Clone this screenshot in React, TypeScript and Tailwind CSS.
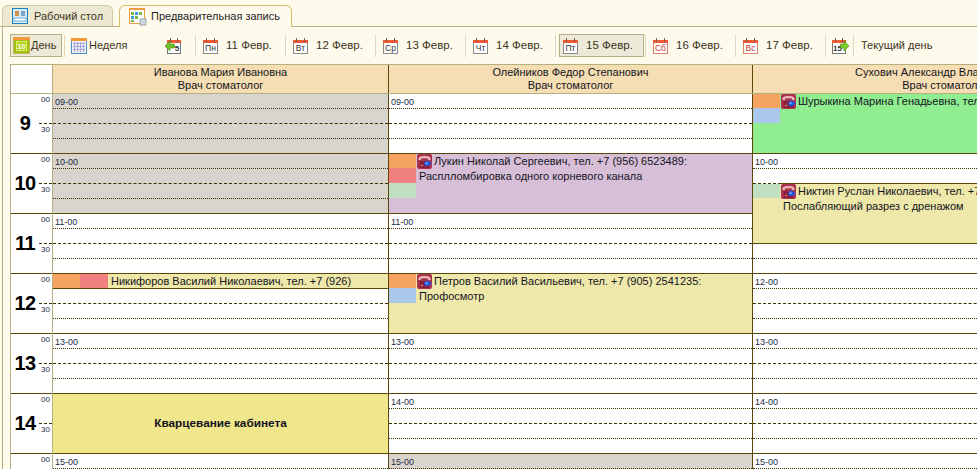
import React from 'react';

const SOLID = 'border-[#5a4808]';

type CalProps = { label: string; red?: boolean };

const CalIcon: React.FC<CalProps> = ({ label, red }) => (
  <svg width="15" height="16" viewBox="0 0 15 16" className="shrink-0">
    <rect x="0.5" y="2.5" width="14" height="13" fill="#fff" stroke={red ? '#e0806a' : '#8a8a8a'} />
    <rect x="0" y="2" width="15" height="3" fill="#ef5a35" />
    <rect x="3" y="0" width="1" height="4" fill="#7a5a50" />
    <rect x="11" y="0" width="1" height="4" fill="#7a5a50" />
    <text x="7.5" y="12.8" textAnchor="middle" fontSize="8.5" fontFamily="Liberation Sans" fill={red ? '#c8402a' : '#333'}>
      {label}
    </text>
  </svg>
);

const ArrowCal: React.FC<{ dir: 'left' | 'right' }> = ({ dir }) => (
  <svg width="17" height="16" viewBox="0 0 17 16" className="shrink-0">
    <rect x={dir === 'left' ? 2.5 : 0.5} y="2.5" width="13" height="13" fill="#fff" stroke="#777" />
    <rect x={dir === 'left' ? 2 : 0} y="2" width="14" height="3" fill="#ef5a35" />
    <rect x={dir === 'left' ? 5 : 3} y="0" width="1" height="4" fill="#7a5a50" />
    <rect x={dir === 'left' ? 12 : 10} y="0" width="1" height="4" fill="#7a5a50" />
    <text x={dir === 'left' ? 12 : 5.5} y="13" textAnchor="middle" fontSize="8" fontFamily="Liberation Sans" fontWeight="700" fill="#333">
      {dir === 'left' ? '5' : '15'}
    </text>
    {dir === 'left' ? (
      <path d="M0 8 L5 3 V6 H9.5 V10 H5 V13 Z" fill="#6cc02c" stroke="#3f8a16" strokeWidth="0.6" />
    ) : (
      <path d="M17 8 L12 3 V6 H8.5 V10 H12 V13 Z" fill="#7ccf2c" stroke="#3f8a16" strokeWidth="0.6" />
    )}
  </svg>
);

const DayIcon = () => (
  <svg width="17" height="17" viewBox="0 0 17 17" className="shrink-0">
    <rect x="0.5" y="0.5" width="16" height="16" fill="#9cc010" stroke="#c9b060" />
    <rect x="0" y="0" width="17" height="3" fill="#f39a3c" />
    <rect x="3.5" y="4.5" width="10" height="9" fill="#b4d020" stroke="#e4ec70" />
    <text x="8.5" y="12" textAnchor="middle" fontSize="7" fontFamily="Liberation Sans" fill="#fff" fontWeight="700">10</text>
  </svg>
);

const WeekIcon = () => (
  <svg width="16" height="16" viewBox="0 0 16 16" className="shrink-0">
    <rect x="0.5" y="0.5" width="15" height="15" fill="#eef0fa" stroke="#4a90c8" />
    <rect x="0" y="0" width="16" height="3" fill="#f39a3c" />
    <path d="M2 5.5h12M2 8.5h12M2 11.5h12M3.5 4v10M6.5 4v10M9.5 4v10M12.5 4v10" stroke="#a9a9d8" strokeWidth="1" />
  </svg>
);

const DesktopIcon = () => (
  <svg width="16" height="16" viewBox="0 0 16 16" className="shrink-0">
    <rect x="0.5" y="0.5" width="15" height="15" fill="#d9ecf8" stroke="#1b7fc0" />
    <rect x="3" y="3" width="4" height="5" fill="#c8924a" />
    <rect x="9" y="3" width="4" height="5" fill="#7aa4c8" />
    <rect x="2" y="10" width="12" height="3" fill="#fff" stroke="#1b7fc0" strokeWidth="0.6" />
  </svg>
);

const ScheduleIcon = () => (
  <svg width="18" height="18" viewBox="0 0 18 18" className="shrink-0">
    <rect x="0.5" y="0.5" width="15" height="15" fill="#fff" stroke="#e8a040" />
    <rect x="0" y="0" width="16" height="2" fill="#f39a3c" />
    <rect x="2" y="4" width="3" height="3" fill="#7cb342" />
    <rect x="6" y="4" width="3" height="3" fill="#3f9ad0" />
    <rect x="10" y="4" width="3" height="3" fill="#7cb342" />
    <rect x="2" y="8" width="3" height="3" fill="#3f9ad0" />
    <rect x="6" y="8" width="3" height="3" fill="#7cb342" />
    <rect x="2" y="12" width="3" height="2" fill="#7cb342" />
    <rect x="11" y="11" width="6" height="6" fill="#cfd8e0" stroke="#7a8a9a" strokeWidth="0.7" />
  </svg>
);

const PhoneIcon = () => (
  <svg width="15" height="15" viewBox="0 0 15 15" className="shrink-0">
    <rect x="0" y="0" width="15" height="15" rx="2" fill="#b03050" />
    <path d="M1 5 Q1 1.5 7.5 1.5 Q14 1.5 14 5 V6.5 H10.5 V4.8 H4.5 V6.5 H1 Z" fill="#f0b0b8" stroke="#6a1428" strokeWidth="0.5" />
    <rect x="2.5" y="7" width="10" height="7" rx="1" fill="#8a2038" />
    <circle cx="5" cy="11.5" r="0.8" fill="#f0b0b8" />
    <circle cx="10" cy="9.5" r="2.8" fill="#1f55e0" />
    <circle cx="9.6" cy="9.2" r="1" fill="#9fc0ff" />
    <path d="M12 7.5 L15 9.5 L12 11.5 Z" fill="#1f55e0" />
  </svg>
);

const Sep = () => <div className="w-px h-[22px] bg-[#dcd8bf] shrink-0" />;

const DayItem: React.FC<{ day: string; date: string; red?: boolean; active?: boolean }> = ({ day, date, red, active }) => (
  <div className="w-[90px] flex items-center shrink-0">
    <div className={`ml-[3px] w-[85px] h-[23px] pl-[3px] flex items-center border ${active ? 'border-[#b5b07f] bg-[#ece9d8]' : 'border-transparent'}`}>
      <CalIcon label={day} red={red} />
      <span className="ml-[8px] text-[11.5px] whitespace-nowrap">{date}</span>
    </div>
    <div className="ml-px"><Sep /></div>
  </div>
);

const Toolbar = () => (
  <div className="h-[37px] pl-[7px] flex items-center text-[11px] text-[#3b3320]">
    <div className="w-[52px] h-[23px] pl-[2px] flex items-center gap-[1px] border border-[#b5b07f] bg-[#ece9d8] shrink-0">
      <DayIcon />
      <span>День</span>
    </div>
    <div className="ml-[2px]"><Sep /></div>
    <div className="ml-[6px] w-[94px] flex items-center gap-[2px] shrink-0">
      <WeekIcon />
      <span>Неделя</span>
    </div>
    <div className="w-[30px] shrink-0"><ArrowCal dir="left" /></div>
    <Sep />
    <DayItem day="Пн" date="11 Февр." />
    <DayItem day="Вт" date="12 Февр." />
    <DayItem day="Ср" date="13 Февр." />
    <DayItem day="Чт" date="14 Февр." />
    <DayItem day="Пт" date="15 Февр." active />
    <DayItem day="Сб" date="16 Февр." red />
    <DayItem day="Вс" date="17 Февр." red />
    <div className="ml-[6px] mr-[4px] shrink-0"><ArrowCal dir="right" /></div>
    <Sep />
    <span className="ml-[7px] whitespace-nowrap">Текущий день</span>
  </div>
);

const slotLines = ['border-dotted', 'border-dashed', 'border-dotted'];

// a run of empty quarter-hour slots, the first one may carry the time label
const Slots: React.FC<{ from: number; count: number; label?: string; gray?: boolean }> = ({ from, count, label, gray }) => (
  <div className={gray ? 'bg-[#d9d4cd]' : 'bg-white'}>
    {Array.from({ length: count }).map((_, i) => {
      const idx = from + i;
      return (
        <div
          key={i}
          className={`h-[15px] border-b pl-[2px] text-[9px] leading-[17px] text-[#1a2a44] ${idx === 3 ? `border-solid ${SOLID}` : `${slotLines[idx]} border-[#3a3000]`}`}
        >
          {i === 0 && label}
        </div>
      );
    })}
  </div>
);

const chipColor: Record<string, string> = {
  o: 'bg-[#f4a460]',
  r: 'bg-[#f08080]',
  g: 'bg-[#c1dfc1]',
  b: 'bg-[#a9c8ec]',
};

const Appt: React.FC<{
  bg: string;
  chips: string[];
  name: string;
  note?: string;
  tucked?: boolean;
}> = ({ bg, chips, name, note, tucked }) => (
  <div className={`h-[60px] flex border-b ${SOLID} ${bg}`}>
    <div className="w-[27px] shrink-0 flex flex-col">
      {chips.map((c, i) => (
        <div key={i} className={`${chipColor[c]} ${i === 0 ? 'h-[14px]' : 'h-[15px]'}`} />
      ))}
    </div>
    <div className={`flex-1 min-w-0 pl-px ${tucked ? `-mt-px border-t ${SOLID}` : ''}`}>
      <div className="h-[15px] flex items-center gap-[2px] whitespace-nowrap">
        <PhoneIcon />
        <span>{name}</span>
      </div>
      {note && <div className="pl-[2px] leading-[14px] whitespace-nowrap">{note}</div>}
    </div>
  </div>
);

const TimeHour: React.FC<{ hour?: number }> = ({ hour }) => (
  <div className={`h-[60px] flex border-b ${SOLID}`}>
    <div className="flex-1 pb-[2px] flex items-center justify-center text-[20px] tracking-[-0.5px] leading-none font-bold text-black">{hour}</div>
    <div className="w-[13px] text-[8px] leading-[12px] text-right pr-[2px] text-[#1a2a44]">
      <div className="h-[15px]">00</div>
      <div className="h-[15px] -mr-[2px] border-b border-dashed border-[#3a3000]" />
      <div className="h-[15px]">30</div>
    </div>
  </div>
);

const ColHead: React.FC<{ name: string; w: string; last?: boolean }> = ({ name, w, last }) => (
  <div className={`${w} shrink-0 h-[28px] bg-[#f5deb3] text-center leading-[13px] pt-px ${last ? '' : `border-r ${SOLID}`}`}>
    <div>{name}</div>
    <div>Врач стоматолог</div>
  </div>
);

const Col: React.FC<{ w: string; last?: boolean; children: React.ReactNode }> = ({ w, last, children }) => (
  <div className={`${w} shrink-0 flex flex-col ${last ? '' : `border-r ${SOLID}`}`}>{children}</div>
);

const Schedule = () => (
  <div className="ml-[7px] w-[1200px] text-[11px] text-[#14141e]">
    <div className="flex border-y border-[#b5b07f]">
      <div className={`w-[43px] h-[28px] shrink-0 bg-white border-l border-[#b5b07f] border-r ${SOLID}`} />
      <ColHead w="w-[336px]" name="Иванова Мария Ивановна" />
      <ColHead w="w-[364px]" name="Олейников Федор Степанович" />
      <ColHead w="w-[384px]" name="Сухович Александр Владимирович" last />
    </div>
    <div className="flex">
      <div className={`w-[43px] shrink-0 bg-white border-l border-[#b5b07f] border-r ${SOLID}`}>
        {[9, 10, 11, 12, 13, 14].map((h) => (
          <TimeHour key={h} hour={h} />
        ))}
        <TimeHour />
      </div>
      <Col w="w-[336px]">
        <Slots from={0} count={4} label="09-00" gray />
        <Slots from={0} count={4} label="10-00" gray />
        <Slots from={0} count={4} label="11-00" />
        <div className={`h-[15px] flex border-b ${SOLID} bg-[#eee8aa]`}>
          <div className="w-[27px] h-[14px] bg-[#f4a460]" />
          <div className="w-[28px] h-[14px] bg-[#f08080]" />
          <span className="ml-[3px] leading-[14px] whitespace-nowrap">Никифоров Василий Николаевич, тел. +7 (926)</span>
        </div>
        <Slots from={1} count={3} />
        <Slots from={0} count={4} label="13-00" />
        <div className={`h-[60px] flex items-center justify-center bg-[#f0e68c] border-b ${SOLID} font-bold text-[11.8px]`}>
          Кварцевание кабинета
        </div>
        <Slots from={0} count={4} label="15-00" />
      </Col>
      <Col w="w-[364px]">
        <Slots from={0} count={4} label="09-00" />
        <Appt bg="bg-[#d8bfd8]" chips={['o', 'r', 'g']} name="Лукин Николай Сергеевич, тел. +7 (956) 6523489:" note="Расплломбировка одного корневого канала" />
        <Slots from={0} count={4} label="11-00" />
        <Appt bg="bg-[#eee8aa]" chips={['o', 'b']} name="Петров Василий Васильевич, тел. +7 (905) 2541235:" note="Профосмотр" />
        <Slots from={0} count={4} label="13-00" />
        <Slots from={0} count={4} label="14-00" />
        <Slots from={0} count={4} label="15-00" gray />
      </Col>
      <Col w="w-[384px]" last>
        <Appt bg="bg-[#90ee90]" chips={['o', 'b']} name="Шурыкина Марина Генадьевна, тел. +7 (916) 4410275:" />
        <Slots from={0} count={2} label="10-00" />
        <Appt bg="bg-[#eee8aa]" chips={['g']} name="Никтин Руслан Николаевич, тел. +7 (903) 7120846:" note="Послабляющий разрез с дренажом" tucked />
        <Slots from={2} count={2} />
        <Slots from={0} count={4} label="12-00" />
        <Slots from={0} count={4} label="13-00" />
        <Slots from={0} count={4} label="14-00" />
        <Slots from={0} count={4} label="15-00" />
      </Col>
    </div>
  </div>
);

export default function App() {
  return (
    <div className="w-[977px] h-[469px] overflow-hidden bg-[#fefaec] font-['Liberation_Sans',Arial,sans-serif]">
      <div className="h-[27px] pl-[2px] pt-[5px] flex items-stretch gap-[6px] border-b border-[#b5b07f] text-[11px]">
        <div className="w-[111px] h-[21px] pl-[9px] flex items-center gap-[6px] rounded-t-[6px] border border-b-0 border-[#cfc9a4] bg-[#ece8d2] text-[#3b3320]">
          <DesktopIcon />
          <span>Рабочий стол</span>
        </div>
        <div className="w-[173px] h-[22px] pl-[9px] flex items-center gap-[4px] rounded-t-[6px] border border-b-0 border-[#d9bb6a] bg-[#fefaec] text-[#222]">
          <ScheduleIcon />
          <span>Предварительная запись</span>
        </div>
      </div>
      <div className="ml-[2px] h-[442px] border-l border-[#b5b07f] overflow-hidden">
        <Toolbar />
        <Schedule />
      </div>
    </div>
  );
}
